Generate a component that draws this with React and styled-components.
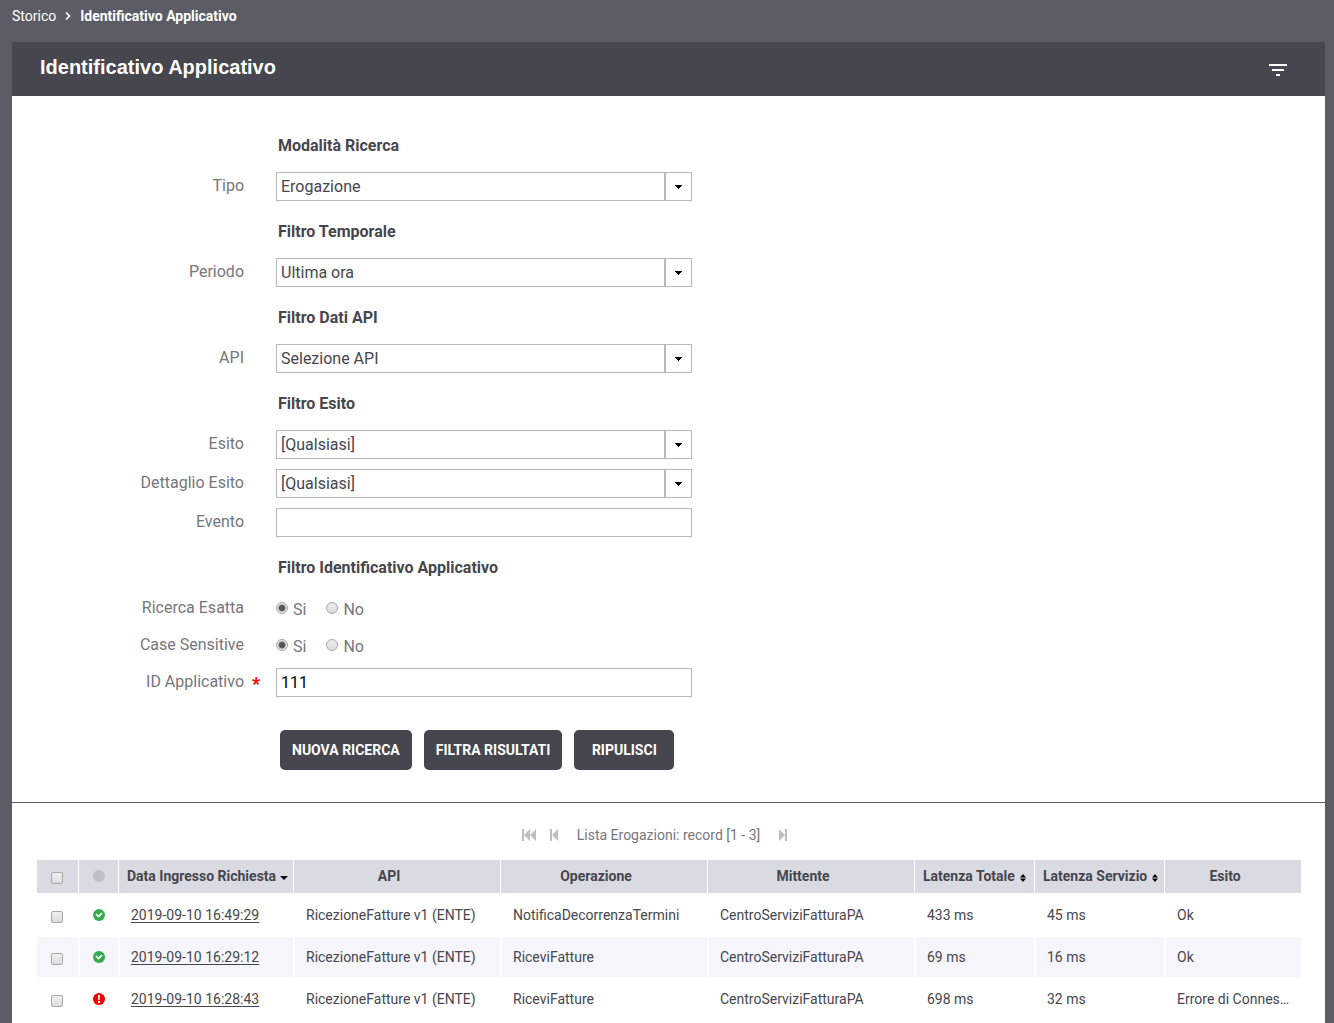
import React from "react";
import styled, { createGlobalStyle, css } from "styled-components";

const GlobalStyle = createGlobalStyle`
  * {
    box-sizing: border-box;
  }

  body {
    margin: 0;
    background: #5c5c66;
    color: #46464e;
    font-family: Roboto, "Liberation Sans", sans-serif;
    font-size: 16px;
  }

  button,
  input,
  select {
    font-family: inherit;
  }
`;

const Page = styled.div`
  display: flex;
  flex-direction: column;
  min-height: 100vh;
`;

const Breadcrumb = styled.nav`
  display: flex;
  align-items: center;
  height: 42px;
  padding: 0 12px 10px;
  font-size: 14px;
  line-height: 16px;
  color: #fff;
`;

const Crumb = styled.a`
  color: #fff;
  text-decoration: none;
`;

const Current = styled.span`
  font-weight: bold;
`;

const Chevron = styled.svg`
  width: 8px;
  height: 10px;
  margin: 0 8px;
`;

const Panel = styled.main`
  display: flex;
  flex: 1;
  flex-direction: column;
  margin: 0 9px 0 12px;
  background: #fff;
`;

const Header = styled.header`
  display: flex;
  align-items: center;
  justify-content: space-between;
  height: 54px;
  padding: 0 36px 0 28px;
  background: #46464e;
`;

const Title = styled.h1`
  margin: 0;
  padding-bottom: 4px;
  font-family: "Liberation Sans", Arial, sans-serif;
  font-size: 20px;
  line-height: 24px;
  color: #fff;
`;

const IconButton = styled.button`
  display: flex;
  padding: 0;
  border: none;
  background: none;
  color: inherit;
`;

const FilterButton = styled(IconButton)`
  padding-top: 2px;
`;

const Form = styled.form`
  border-bottom: 1px solid #5c5c66;
  padding: 29px 24px 32px;
`;

const Fields = styled.div`
  display: grid;
  grid-template-columns: 208px minmax(0, 416px);
  column-gap: 32px;
  row-gap: 10px;
`;

const SectionTitle = styled.h2`
  grid-column: 2;
  height: 37px;
  margin: 0;
  padding: 4px 2px 0;
  font-size: 16px;
  line-height: 34px;
`;

const Label = styled.label`
  justify-self: end;
  font-size: 16px;
  line-height: 27px;
  color: #76767e;
`;

const RequiredLabel = styled(Label)`
  display: flex;
  gap: 8px;
  margin-right: -16px;
`;

const Required = styled.span`
  width: 8px;
  padding-top: 3px;
  font-size: 18px;
  font-weight: bold;
  line-height: 26px;
  color: #f00000;
`;

const box = css`
  width: 100%;
  height: 29px;
  border: 1px solid #b9b9bd;
  border-radius: 0;
  padding: 0 4px;
  background: #fff;
  font-size: 16px;
`;

const TextInput = styled.input`
  ${box}
  color: #000;
`;

const SelectBox = styled.div`
  position: relative;
`;

const Select = styled.select`
  ${box}
  appearance: none;
  color: #46464e;
`;

const SelectArrow = styled.span`
  position: absolute;
  top: 1px;
  right: 1px;
  bottom: 1px;
  display: flex;
  align-items: center;
  justify-content: center;
  width: 27px;
  border-left: 2px solid #b9b9bd;
  pointer-events: none;
`;

const RadioGroup = styled.div`
  display: flex;
  gap: 20px;
  height: 27px;
`;

const RadioLabel = styled.label`
  display: flex;
  align-items: center;
  gap: 5px;
  height: 32px;
  line-height: 32px;
  color: #76767e;
`;

const Radio = styled.input.attrs({ type: "radio" })`
  appearance: none;
  width: 12px;
  height: 12px;
  margin: 0 0 4px;
  border: 1px solid #a8a8a8;
  border-radius: 50%;
  background: linear-gradient(#ececec, #dcdcdc);

  &:checked {
    background: radial-gradient(circle, #555 0 2px, #666 3px, #e4e4e4 4px);
  }
`;

const Actions = styled.div`
  display: flex;
  gap: 12px;
  padding: 33px 0 0 244px;
`;

const Action = styled.button`
  min-width: 100px;
  height: 40px;
  padding: 0 12px;
  border: none;
  border-radius: 5px;
  background: #46464e;
  font-size: 14px;
  font-weight: bold;
  color: #fff;
`;

const Pager = styled.div`
  display: flex;
  align-items: center;
  justify-content: center;
  height: 57px;
  padding: 6px 27px 0 0;
  font-size: 14px;
  color: #76767e;
`;

const PagerText = styled.span`
  margin: 0 19px 0 18px;
`;

const PagerButton = styled(IconButton)`
  color: #bdbdc4;

  & + & {
    margin-left: 14px;
  }
`;

const Results = styled.div`
  padding: 0 24px 0 25px;
`;

const Table = styled.table`
  width: 100%;
  table-layout: fixed;
  border-collapse: separate;
  border-spacing: 0;
  font-size: 14px;
`;

const Col = styled.col`
  width: ${props => (props.$width ? `${props.$width}px` : "auto")};
`;

const Th = styled.th`
  height: 34px;
  padding: 0 24px 2px 8px;
  border: 0 solid #fff;
  border-width: 0 1px 1px 0;
  background: #dadae3;
  line-height: 30px;
  white-space: nowrap;

  &:last-child {
    border-right: none;
  }
`;

const SortTh = styled(Th)`
  padding: 0 4px 2px 8px;
`;

const IconTh = styled(Th)`
  padding: ${props => (props.$low ? "3px 2px 0 0" : "0 0 2px")};
`;

const Sort = styled.button`
  display: flex;
  align-items: center;
  gap: 4px;
  padding: 0;
  border: none;
  background: none;
  font-size: 14px;
  font-weight: bold;
  line-height: 30px;
  color: inherit;

  svg {
    margin-top: 4px;
  }
`;

const Row = styled.tr`
  background: ${props => (props.$striped ? "#f5f5fb" : "#fff")};
`;

const Td = styled.td`
  height: 42px;
  padding: 0 10px 0 11px;
  border: 1px solid #fff;
  overflow: hidden;
  text-overflow: ellipsis;
  white-space: nowrap;

  &:first-child {
    border-left: none;
  }

  &:last-child {
    border-right: none;
  }
`;

const IconTd = styled(Td)`
  padding: ${props => (props.$low ? "4px 2px 0 0" : 0)};
`;

const Center = styled.div`
  display: flex;
  align-items: center;
  justify-content: center;
`;

const Checkbox = styled.input.attrs({ type: "checkbox" })`
  appearance: none;
  width: 12px;
  height: 12px;
  margin: 0;
  border: 1px solid #a8a8a8;
  border-radius: 2px;
  background: linear-gradient(#efefef, #dcdcdc);
`;

const DateLink = styled.a`
  color: inherit;
  text-decoration: underline;
  text-underline-offset: 2px;
`;

const records = [
  {
    date: "2019-09-10 16:49:29",
    operation: "NotificaDecorrenzaTermini",
    total: "433 ms",
    service: "45 ms",
    outcome: "Ok",
    ok: true
  },
  {
    date: "2019-09-10 16:29:12",
    operation: "RiceviFatture",
    total: "69 ms",
    service: "16 ms",
    outcome: "Ok",
    ok: true
  },
  {
    date: "2019-09-10 16:28:43",
    operation: "RiceviFatture",
    total: "698 ms",
    service: "32 ms",
    outcome: "Errore di Connes…",
    ok: false
  }
];

const columns = [42, 40, 175, 207, 207, 207, 120, 130, null];

function SelectField({ id, label, value }) {
  return (
    <>
      <Label htmlFor={id}>{label}</Label>
      <SelectBox>
        <Select id={id}>
          <option>{value}</option>
        </Select>
        <SelectArrow>
          <svg width="7" height="4" viewBox="0 0 7 4" shapeRendering="crispEdges">
            <path d="M0 0h7v1h-1v1h-1v1h-1v1h-1v-1h-1v-1h-1v-1h-1z" />
          </svg>
        </SelectArrow>
      </SelectBox>
    </>
  );
}

function RadioField({ name, label }) {
  return (
    <>
      <Label as="span" id={name}>
        {label}
      </Label>
      <RadioGroup role="radiogroup" aria-labelledby={name}>
        <RadioLabel>
          <Radio name={name} defaultChecked />
          Si
        </RadioLabel>
        <RadioLabel>
          <Radio name={name} />
          No
        </RadioLabel>
      </RadioGroup>
    </>
  );
}

function Status({ ok }) {
  return (
    <svg width="12" height="12" viewBox="0 0 12 12">
      <circle cx="6" cy="6" r="6" fill={ok ? "#34ac4e" : "#f00000"} />
      {ok ? (
        <path d="M3 5l2.500 2.500L9 4.200" fill="none" stroke="#fff" strokeWidth="1.700" />
      ) : (
        <path d="M5 2h2l-.3 5H5.300zM5 8h2v2H5z" fill="#fff" />
      )}
    </svg>
  );
}

function SortIcon() {
  return (
    <svg width="8" height="8" viewBox="0 0 8 8">
      <path d="M1 3.500L4 0l3 3.500zM1 4.500h6L4 8z" />
    </svg>
  );
}

function SearchForm() {
  return (
    <Form onSubmit={e => e.preventDefault()}>
      <Fields>
        <SectionTitle>Modalità Ricerca</SectionTitle>
        <SelectField id="tipo" label="Tipo" value="Erogazione" />
        <SectionTitle>Filtro Temporale</SectionTitle>
        <SelectField id="periodo" label="Periodo" value="Ultima ora" />
        <SectionTitle>Filtro Dati API</SectionTitle>
        <SelectField id="api" label="API" value="Selezione API" />
        <SectionTitle>Filtro Esito</SectionTitle>
        <SelectField id="esito" label="Esito" value="[Qualsiasi]" />
        <SelectField id="dettaglio" label="Dettaglio Esito" value="[Qualsiasi]" />
        <Label htmlFor="evento">Evento</Label>
        <TextInput id="evento" />
        <SectionTitle>Filtro Identificativo Applicativo</SectionTitle>
        <RadioField name="esatta" label="Ricerca Esatta" />
        <RadioField name="case" label="Case Sensitive" />
        <RequiredLabel htmlFor="id-applicativo">
          ID Applicativo <Required>*</Required>
        </RequiredLabel>
        <TextInput id="id-applicativo" defaultValue="111" />
      </Fields>
      <Actions>
        <Action>NUOVA RICERCA</Action>
        <Action>FILTRA RISULTATI</Action>
        <Action type="reset">RIPULISCI</Action>
      </Actions>
    </Form>
  );
}

function ResultsTable() {
  return (
    <Results>
      <Table>
        <colgroup>
          {columns.map((width, i) => (
            <Col key={i} $width={width} />
          ))}
        </colgroup>
        <thead>
          <tr>
            <IconTh $low>
              <Center>
                <Checkbox aria-label="Seleziona tutti" />
              </Center>
            </IconTh>
            <IconTh>
              <Center>
                <svg width="12" height="12" viewBox="0 0 12 12">
                  <circle cx="6" cy="6" r="6" fill="#c0c0ca" />
                </svg>
              </Center>
            </IconTh>
            <SortTh>
              <Sort>
                Data Ingresso Richiesta
                <svg width="8" height="5" viewBox="0 0 8 5">
                  <path d="M0 1h8L4 5z" />
                </svg>
              </Sort>
            </SortTh>
            <Th>API</Th>
            <Th>Operazione</Th>
            <Th>Mittente</Th>
            <SortTh>
              <Sort>
                Latenza Totale <SortIcon />
              </Sort>
            </SortTh>
            <SortTh>
              <Sort>
                Latenza Servizio <SortIcon />
              </Sort>
            </SortTh>
            <Th>Esito</Th>
          </tr>
        </thead>
        <tbody>
          {records.map((record, i) => (
            <Row key={record.date} $striped={i % 2 === 1}>
              <IconTd $low>
                <Center>
                  <Checkbox aria-label={record.date} />
                </Center>
              </IconTd>
              <IconTd>
                <Center>
                  <Status ok={record.ok} />
                </Center>
              </IconTd>
              <Td>
                <DateLink href="#">{record.date}</DateLink>
              </Td>
              <Td>RicezioneFatture v1 (ENTE)</Td>
              <Td>{record.operation}</Td>
              <Td>CentroServiziFatturaPA</Td>
              <Td>{record.total}</Td>
              <Td>{record.service}</Td>
              <Td>{record.outcome}</Td>
            </Row>
          ))}
        </tbody>
      </Table>
    </Results>
  );
}

function App() {
  return (
    <Page>
      <GlobalStyle />
      <Breadcrumb>
        <Crumb href="#">Storico</Crumb>
        <Chevron viewBox="0 0 8 10">
          <path d="M2 1.500L5.500 5 2 8.500" fill="none" stroke="#fff" strokeWidth="1.600" />
        </Chevron>
        <Current>Identificativo Applicativo</Current>
      </Breadcrumb>
      <Panel>
        <Header>
          <Title>Identificativo Applicativo</Title>
          <FilterButton aria-label="Filtra">
            <svg width="22" height="12" viewBox="0 0 22 12" fill="#fff">
              <path d="M2 0h18v2H2zM5 5h12v2H5zM9 10h4v2H9z" />
            </svg>
          </FilterButton>
        </Header>
        <SearchForm />
        <Pager>
          <PagerButton aria-label="Prima pagina">
            <svg width="14" height="12" viewBox="0 0 14 12" fill="currentColor">
              <path d="M0 0h2v12H0zM8 0v12L2 6zM14 0v12L8 6z" />
            </svg>
          </PagerButton>
          <PagerButton aria-label="Pagina precedente">
            <svg width="9" height="12" viewBox="0 0 9 12" fill="currentColor">
              <path d="M0 0h2v12H0zM8 0v12L2 6z" />
            </svg>
          </PagerButton>
          <PagerText>Lista Erogazioni: record [1 - 3]</PagerText>
          <PagerButton aria-label="Pagina successiva">
            <svg width="9" height="12" viewBox="0 0 9 12" fill="currentColor">
              <path d="M6 0h2v12H6zM0 0v12l6-6z" />
            </svg>
          </PagerButton>
        </Pager>
        <ResultsTable />
      </Panel>
    </Page>
  );
}

export default App;
